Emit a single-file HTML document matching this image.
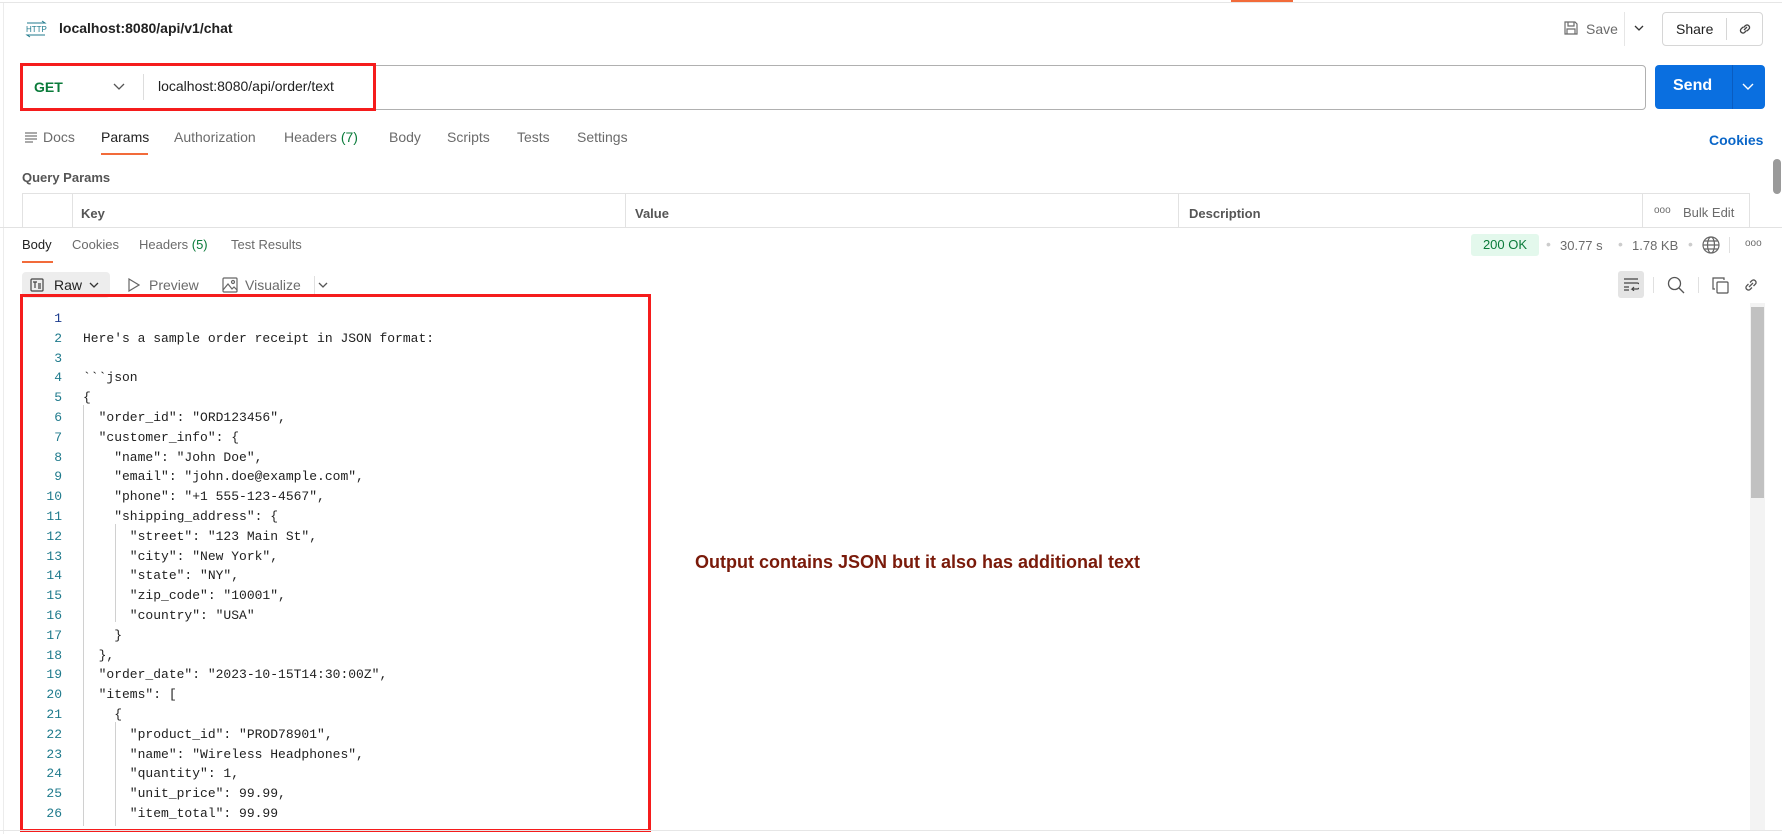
<!DOCTYPE html>
<html><head><meta charset="utf-8"><style>
*{box-sizing:border-box;margin:0;padding:0}
body{width:1782px;height:834px;background:#fff;font-family:"Liberation Sans",sans-serif;color:#212121;position:relative;overflow:hidden;font-size:14px}
.a{position:absolute;white-space:nowrap}
.g{color:#6b6b6b}
.code{position:absolute;left:83px;top:309px;font-family:"Liberation Mono",monospace;font-size:13px;line-height:19.8px;white-space:pre;color:#212121}
.nums{position:absolute;left:24px;top:309px;width:38px;text-align:right;font-family:"Liberation Mono",monospace;font-size:13px;line-height:19.8px;white-space:pre;color:#1f7a8c}
</style></head><body>
<div class="a" style="left:0;top:0;width:1782px;height:3px;border-bottom:1px solid #e6e6e6"></div>
<div class="a" style="left:1231px;top:0;width:62px;height:2px;background:#f26b3a"></div>
<div class="a" style="left:3px;top:3px;width:1px;height:831px;background:#ececec"></div>
<svg class="a" style="left:25px;top:20px" width="22" height="18" viewBox="0 0 22 18"><text x="1" y="12" font-size="8" font-family="Liberation Sans" fill="#1f7a8c">HTTP</text><path d="M2 3h18l-3-2M20 15H2l3 2" stroke="#1f7a8c" fill="none" stroke-width="1"/></svg>
<div class="a" style="left:59px;top:20px;font-size:14px;font-weight:bold;color:#212121">localhost:8080/api/v1/chat</div>
<svg class="a" style="left:1563px;top:20px" width="16" height="16" viewBox="0 0 16 16" fill="none" stroke="#6b6b6b" stroke-width="1.2"><path d="M2 2h10l2 2v10H2z M5 2v4h6V2 M4 14v-5h8v5"/></svg>
<div class="a g" style="left:1586px;top:21px;font-size:14px">Save</div>
<div class="a" style="left:1624px;top:12px;width:1px;height:34px;background:#e6e6e6"></div>
<svg class="a" style="left:1634px;top:24px" width="10" height="8"><path d="M1 2l4 4 4-4" stroke="#333" fill="none" stroke-width="1.3"/></svg>
<div class="a" style="left:1662px;top:12px;width:101px;height:34px;border:1px solid #d6d6d6;border-radius:4px"></div>
<div class="a" style="left:1676px;top:21px;font-size:14px">Share</div>
<div class="a" style="left:1726px;top:18px;width:1px;height:22px;background:#d6d6d6"></div>
<svg class="a" style="left:1737px;top:21px" width="16" height="16" viewBox="0 0 16 16" fill="none" stroke="#444" stroke-width="1.3"><path d="M7 9l3-3M6 6L4 8a2.5 2.5 0 003.5 3.5L9.5 9.5M10 10l2-2A2.5 2.5 0 008.5 4.5L6.5 6.5"/></svg>
<div class="a" style="left:20px;top:65px;width:1626px;height:45px;border:1px solid #b0b0b0;border-radius:4px"></div>
<div class="a" style="left:20px;top:63px;width:356px;height:48px;border:3px solid #f51c1c"></div>
<div class="a" style="left:34px;top:79px;font-weight:bold;color:#0a7b3a;font-size:14px">GET</div>
<svg class="a" style="left:113px;top:83px" width="12" height="8"><path d="M1 1l5 5 5-5" stroke="#555" fill="none" stroke-width="1.3"/></svg>
<div class="a" style="left:143px;top:74px;width:1px;height:26px;background:#ddd"></div>
<div class="a" style="left:158px;top:78px;font-size:14px">localhost:8080/api/order/text</div>
<div class="a" style="left:1655px;top:65px;width:110px;height:44px;background:#0a6fe0;border-radius:4px"></div>
<div class="a" style="left:1732px;top:65px;width:1px;height:44px;background:#0a5cc0"></div>
<div class="a" style="left:1673px;top:77px;font-size:16px;font-weight:bold;color:#fff">Send</div>
<svg class="a" style="left:1742px;top:83px" width="12" height="8"><path d="M1 1l5 5 5-5" stroke="#fff" fill="none" stroke-width="1.4"/></svg>
<svg class="a" style="left:25px;top:131px" width="12" height="12"><path d="M0 2h12M0 5h12M0 8h12M0 11h8" stroke="#777" stroke-width="1.2"/></svg>
<div class="a g" style="left:43px;top:129px">Docs</div>
<div class="a" style="left:101px;top:129px">Params</div>
<div class="a" style="left:101px;top:153px;width:47px;height:2px;background:#f26b3a"></div>
<div class="a g" style="left:174px;top:129px">Authorization</div>
<div class="a g" style="left:284px;top:129px">Headers <span style="color:#0a7b3a">(7)</span></div>
<div class="a g" style="left:389px;top:129px">Body</div>
<div class="a g" style="left:447px;top:129px">Scripts</div>
<div class="a g" style="left:517px;top:129px">Tests</div>
<div class="a g" style="left:577px;top:129px">Settings</div>
<div class="a" style="left:1709px;top:132px;font-weight:bold;color:#0a66c8;font-size:14px">Cookies</div>
<div class="a" style="left:22px;top:170px;font-weight:bold;color:#555;font-size:13px">Query Params</div>
<div class="a" style="left:1773px;top:159px;width:8px;height:35px;background:#9a9a9a;border-radius:4px"></div>
<div class="a" style="left:22px;top:193px;width:1728px;height:35px;border:1px solid #e2e2e2;border-bottom:none"></div>
<div class="a" style="left:72px;top:193px;width:1px;height:35px;background:#e2e2e2"></div>
<div class="a" style="left:625px;top:193px;width:1px;height:35px;background:#e2e2e2"></div>
<div class="a" style="left:1178px;top:193px;width:1px;height:35px;background:#e2e2e2"></div>
<div class="a" style="left:1642px;top:193px;width:1px;height:35px;background:#e2e2e2"></div>
<div class="a" style="left:81px;top:206px;font-weight:bold;color:#555;font-size:13px">Key</div>
<div class="a" style="left:635px;top:206px;font-weight:bold;color:#555;font-size:13px">Value</div>
<div class="a" style="left:1189px;top:206px;font-weight:bold;color:#555;font-size:13px">Description</div>
<div class="a g" style="left:1654px;top:205px;font-size:10px">ooo</div>
<div class="a g" style="left:1683px;top:205px;font-size:13px">Bulk Edit</div>
<div class="a" style="left:0;top:227px;width:1782px;height:1px;background:#e2e2e2"></div>
<div class="a" style="left:22px;top:237px;font-size:13px">Body</div>
<div class="a" style="left:22px;top:261px;width:31px;height:2px;background:#f26b3a"></div>
<div class="a g" style="left:72px;top:237px;font-size:13px">Cookies</div>
<div class="a g" style="left:139px;top:237px;font-size:13px">Headers <span style="color:#0a7b3a">(5)</span></div>
<div class="a g" style="left:231px;top:237px;font-size:13px">Test Results</div>
<div class="a" style="left:1471px;top:234px;width:68px;height:22px;background:#e3f8ec;border-radius:3px;color:#0a7b3a;font-size:13px;text-align:center;line-height:22px">200 OK</div>
<div class="a" style="left:1546px;top:236px;color:#ccc">•</div>
<div class="a g" style="left:1560px;top:238px;font-size:13px">30.77 s</div>
<div class="a" style="left:1618px;top:236px;color:#ccc">•</div>
<div class="a g" style="left:1632px;top:238px;font-size:13px">1.78 KB</div>
<div class="a" style="left:1688px;top:236px;color:#ccc">•</div>
<svg class="a" style="left:1702px;top:236px" width="18" height="18" viewBox="0 0 18 18" fill="none" stroke="#666" stroke-width="1.2"><circle cx="9" cy="9" r="8"/><ellipse cx="9" cy="9" rx="3.5" ry="8"/><path d="M1 9h16M2.5 5h13M2.5 13h13"/></svg>
<div class="a" style="left:1729px;top:237px;width:1px;height:16px;background:#e0e0e0"></div>
<div class="a g" style="left:1745px;top:238px;font-size:10px">ooo</div>
<div class="a" style="left:22px;top:272px;width:88px;height:26px;background:#ededed;border-radius:4px"></div>
<svg class="a" style="left:30px;top:278px" width="14" height="14" viewBox="0 0 14 14" fill="none" stroke="#444" stroke-width="1.2"><rect x="1" y="1" width="12" height="12" rx="1"/><path d="M3 4h4M5 4v6M8 6h3M8 8h3M8 10h3"/></svg>
<div class="a" style="left:54px;top:277px;font-size:14px">Raw</div>
<svg class="a" style="left:89px;top:282px" width="10" height="7"><path d="M1 1l4 4 4-4" stroke="#333" fill="none" stroke-width="1.3"/></svg>
<svg class="a" style="left:128px;top:278px" width="12" height="14"><path d="M1 1l10 6-10 6z" stroke="#666" fill="none" stroke-width="1.2"/></svg>
<div class="a g" style="left:149px;top:277px;font-size:14px">Preview</div>
<svg class="a" style="left:222px;top:277px" width="16" height="16" viewBox="0 0 16 16" fill="none" stroke="#666" stroke-width="1.2"><rect x="1" y="1" width="14" height="14" rx="1"/><path d="M1 13l5-6 4 5 2-2 3 3"/><circle cx="11" cy="5" r="1.5"/></svg>
<div class="a g" style="left:245px;top:277px;font-size:14px">Visualize</div>
<div class="a" style="left:314px;top:276px;width:1px;height:18px;background:#e0e0e0"></div>
<svg class="a" style="left:318px;top:282px" width="10" height="7"><path d="M1 1l4 4 4-4" stroke="#555" fill="none" stroke-width="1.3"/></svg>
<div class="a" style="left:1618px;top:271px;width:26px;height:27px;background:#e4e4e4;border-radius:3px"></div>
<svg class="a" style="left:1623px;top:277px" width="16" height="14"><path d="M1 2h14M1 6h13a3 3 0 010 6H9l2-2M9 12l2 2M1 10h5M1 13h5" stroke="#444" fill="none" stroke-width="1.2"/></svg>
<div class="a" style="left:1653px;top:277px;width:1px;height:16px;background:#e0e0e0"></div>
<svg class="a" style="left:1667px;top:276px" width="18" height="18"><circle cx="7.5" cy="7.5" r="6" stroke="#555" fill="none" stroke-width="1.3"/><path d="M12 12l5 5" stroke="#555" stroke-width="1.3"/></svg>
<div class="a" style="left:1698px;top:277px;width:1px;height:16px;background:#e0e0e0"></div>
<svg class="a" style="left:1712px;top:277px" width="17" height="17" fill="none" stroke="#555" stroke-width="1.2"><rect x="5" y="5" width="11" height="11" rx="1"/><path d="M3 12H1V1h11v2"/></svg>
<svg class="a" style="left:1743px;top:277px" width="16" height="16" viewBox="0 0 16 16" fill="none" stroke="#555" stroke-width="1.3"><path d="M6 10l4-4M5.5 7L3.5 9a2.5 2.5 0 003.5 3.5L9 10.5M10.5 9L12.5 7A2.5 2.5 0 009 3.5L7 5.5"/></svg>
<div class="a" style="left:1750px;top:303px;width:15px;height:527px;background:#f3f3f3"></div>
<div class="a" style="left:1751px;top:307px;width:13px;height:191px;background:#c1c1c1"></div>
<div class="a" style="left:20px;top:294px;width:631px;height:538px;border:3px solid #f51c1c"></div>
<div class="a" style="left:83px;top:405px;width:1px;height:421px;background:#d0d0d0"></div>
<div class="a" style="left:115px;top:524px;width:1px;height:98px;background:#d0d0d0"></div>
<div class="a" style="left:115px;top:722px;width:1px;height:104px;background:#d0d0d0"></div>
<div class="nums"><span style="color:#1a3a8c">1</span>
2
3
4
5
6
7
8
9
10
11
12
13
14
15
16
17
18
19
20
21
22
23
24
25
26</div>
<div class="code">
Here's a sample order receipt in JSON format:

&#96;&#96;&#96;json
{
  "order_id": "ORD123456",
  "customer_info": {
    "name": "John Doe",
    "email": "john.doe@example.com",
    "phone": "+1 555-123-4567",
    "shipping_address": {
      "street": "123 Main St",
      "city": "New York",
      "state": "NY",
      "zip_code": "10001",
      "country": "USA"
    }
  },
  "order_date": "2023-10-15T14:30:00Z",
  "items": [
    {
      "product_id": "PROD78901",
      "name": "Wireless Headphones",
      "quantity": 1,
      "unit_price": 99.99,
      "item_total": 99.99</div>
<div class="a" style="left:695px;top:552px;font-size:18px;font-weight:bold;color:#7a1a0a">Output contains JSON but it also has additional text</div>
<div class="a" style="left:0;top:830px;width:1782px;height:1px;background:#e6e6e6"></div>
</body></html>
